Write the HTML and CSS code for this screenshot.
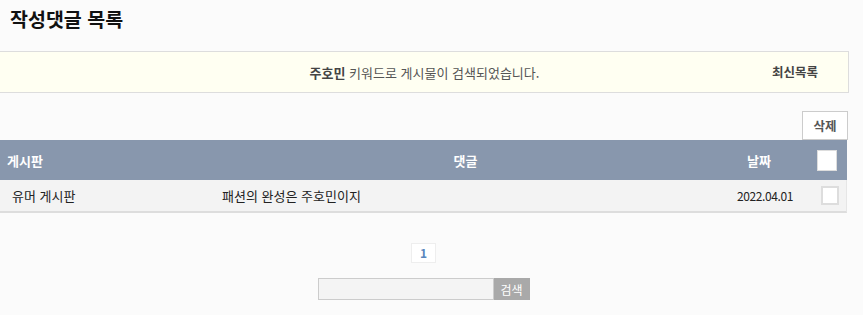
FILE: index.html
```html
<!DOCTYPE html>
<html lang="ko">
<head>
<meta charset="utf-8">
<link rel="stylesheet" href="styles.css">
</head>
<body>
<div class="wrap">
  <h1 class="title">작성댓글 목록</h1>
  <div class="notice">
    <p class="notice-msg"><b>주호민</b> 키워드로 게시물이 검색되었습니다.</p>
    <a class="latest">최신목록</a>
  </div>
  <div class="actions"><button class="del">삭제</button></div>
  <div class="table">
    <div class="thead">
      <span class="c-board">게시판</span>
      <span class="c-comment">댓글</span>
      <span class="c-date">날짜</span>
      <span class="c-chk"><span class="chk chk-head"></span></span>
    </div>
    <div class="trow">
      <span class="c-board r-board">유머 게시판</span>
      <span class="c-comment r-comment">패션의 완성은 주호민이지</span>
      <span class="c-date r-date">2022.04.01</span>
      <span class="c-chk"><span class="chk chk-row"></span></span>
    </div>
  </div>
  <div class="pager"><span class="page">1</span></div>
  <div class="search">
    <input class="search-input" type="text">
    <button class="search-btn">검색</button>
  </div>
</div>
</body>
</html>
```
FILE: styles.css
```css
html, body { margin: 0; padding: 0; background: #fbfbfb; }
body { font-family: "Noto Sans CJK KR", "Noto Sans", sans-serif; color: #222; }
.wrap { width: 849px; }
.title { margin: 0; padding: 5px 0 0 10px; height: 51px; box-sizing: border-box; font-size: 19.5px; font-weight: bold; color: #111; line-height: 28px; }
.notice { height: 42px; box-sizing: border-box; background: #fffff2; border: 1px solid #ddd; border-left: 0; display: flex; align-items: center; position: relative; font-size: 13px; color: #555; }
.notice-msg { margin: 0; flex: 1; text-align: center; padding-left: 1px; }
.notice-msg b { color: #444; }
.latest { position: absolute; right: 30px; top: 10px; font-weight: bold; color: #444; font-size: 12.5px; }
.actions { display: flex; justify-content: flex-end; padding: 18px 1px 0 0; }
.del { width: 46px; height: 29px; border: 1px solid #ccc; background: #fff; font-family: inherit; font-size: 12.5px; font-weight: bold; color: #555; padding: 0; }
.table { width: 847px; }
.thead { height: 40px; background: #8897ad; display: flex; align-items: center; color: #fff; font-weight: bold; font-size: 13px; }
.trow { height: 33px; box-sizing: border-box; background: #f3f3f3; border-bottom: 2px solid #ddd; border-right: 1px solid #e6e6e6; display: flex; align-items: center; font-size: 13px; color: #222; }
.c-board { width: 222px; box-sizing: border-box; padding-left: 7px; }
.r-board { padding-left: 12px; }
.c-comment { flex: 1; }
.thead .c-comment { text-align: center; padding-right: 38px; }
.thead .c-date { width: 70px; }
.r-date { width: 84px; font-size: 12px; letter-spacing: -0.4px; }
.thead .c-chk { width: 30px; display: flex; }
.trow .c-chk { width: 25px; display: flex; }
.chk { display: block; box-sizing: border-box; background: #fff; border: 1px solid #ddd; }
.chk-head { width: 20px; height: 21px; }
.chk-row { width: 18px; height: 19px; border: 2px solid #ddd; }
.pager { display: flex; justify-content: center; padding-top: 30px; padding-right: 2px; }
.page { width: 25px; height: 20px; box-sizing: border-box; border: 1px solid #eee; background: #fff; color: #5a86bd; font-weight: bold; font-size: 12px; text-align: center; line-height: 18px; }
.search { display: flex; justify-content: center; padding-top: 15px; padding-right: 2px; }
.search-input { width: 176px; height: 22px; box-sizing: border-box; border: 1px solid #ccc; background: #f4f4f4; margin: 0; padding: 0; }
.search-btn { width: 36px; height: 22px; border: 0; background: #a9a9a9; color: #fff; font-family: inherit; font-size: 12px; margin: 0; padding: 0; }
```
